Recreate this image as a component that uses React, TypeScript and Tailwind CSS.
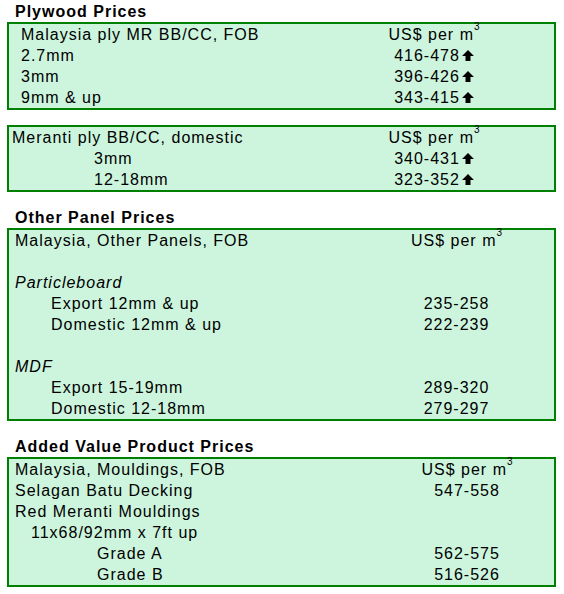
import React from 'react';

type Row = { label?: React.ReactNode; pad?: string; price?: string; up?: boolean; unit?: boolean; italic?: boolean };

const UpArrow = () => (
  <svg width="12" height="11" viewBox="0 0 12 11" className="inline-block ml-[2px] align-baseline">
    <polygon points="6,0 12,6 8.5,6 8.5,11 3.5,11 3.5,6 0,6" fill="#000" />
  </svg>
);

const Unit = () => (
  <span>
    US$ per m<span className="relative -top-[10px] text-[10px] leading-none tracking-normal">3</span>
  </span>
);

// one green bordered box; colW sets where the price column is centred
const PriceBox = ({ rows, colW, className = '' }: { rows: Row[]; colW: string; className?: string }) => (
  <div className={`mx-[7px] w-[549px] border-2 border-[#008000] bg-[#cdf5dd] ${className}`}>
    {rows.map((r, i) => (
      <div key={i} className="flex h-[21px] leading-[21px]">
        <div className={`flex-1 whitespace-nowrap ${r.pad ?? ''} ${r.italic ? 'italic' : ''}`}>{r.label}</div>
        <div className={`${colW} text-center whitespace-nowrap`}>
          {r.unit ? <Unit /> : r.price}
          {r.up && <UpArrow />}
        </div>
      </div>
    ))}
  </div>
);

const Heading = ({ children, className = '' }: { children: React.ReactNode; className?: string }) => (
  <h2 className={`ml-[15px] font-bold text-[16px] leading-[20px] ${className}`}>{children}</h2>
);

export default function App() {
  return (
    <div
      className="w-[564px] h-[594px] bg-white text-black text-[16px] tracking-[1px] pt-[2px]"
      style={{ fontFamily: '"Liberation Sans", Arial, sans-serif' }}
    >
      <Heading>Plywood Prices</Heading>
      <PriceBox
        colW="w-[240px]"
        rows={[
          { label: 'Malaysia ply MR BB/CC, FOB', pad: 'pl-[12px]', unit: true },
          { label: '2.7mm', pad: 'pl-[12px]', price: '416-478', up: true },
          { label: '3mm', pad: 'pl-[12px]', price: '396-426', up: true },
          { label: '9mm & up', pad: 'pl-[12px]', price: '343-415', up: true },
        ]}
      />

      <PriceBox
        className="mt-[15px]"
        colW="w-[240px]"
        rows={[
          { label: 'Meranti ply BB/CC, domestic', pad: 'pl-[3px]', unit: true },
          { label: '3mm', pad: 'pl-[85px]', price: '340-431', up: true },
          { label: '12-18mm', pad: 'pl-[85px]', price: '323-352', up: true },
        ]}
      />

      <Heading className="mt-[16px]">Other Panel Prices</Heading>
      <PriceBox
        colW="w-[195px]"
        rows={[
          { label: 'Malaysia, Other Panels, FOB', pad: 'pl-[6px]', unit: true },
          {},
          { label: 'Particleboard', pad: 'pl-[6px]', italic: true },
          { label: 'Export 12mm & up', pad: 'pl-[42px]', price: '235-258' },
          { label: 'Domestic 12mm & up', pad: 'pl-[42px]', price: '222-239' },
          {},
          { label: 'MDF', pad: 'pl-[6px]', italic: true },
          { label: 'Export 15-19mm', pad: 'pl-[42px]', price: '289-320' },
          { label: 'Domestic 12-18mm', pad: 'pl-[42px]', price: '279-297' },
        ]}
      />

      <Heading className="mt-[16px]">Added Value Product Prices</Heading>
      <PriceBox
        colW="w-[174px]"
        rows={[
          { label: 'Malaysia, Mouldings, FOB', pad: 'pl-[6px]', unit: true },
          { label: 'Selagan Batu Decking', pad: 'pl-[6px]', price: '547-558' },
          { label: 'Red Meranti Mouldings', pad: 'pl-[6px]' },
          { label: '11x68/92mm x 7ft up', pad: 'pl-[22px]' },
          { label: 'Grade A', pad: 'pl-[88px]', price: '562-575' },
          { label: 'Grade B', pad: 'pl-[88px]', price: '516-526' },
        ]}
      />
    </div>
  );
}
